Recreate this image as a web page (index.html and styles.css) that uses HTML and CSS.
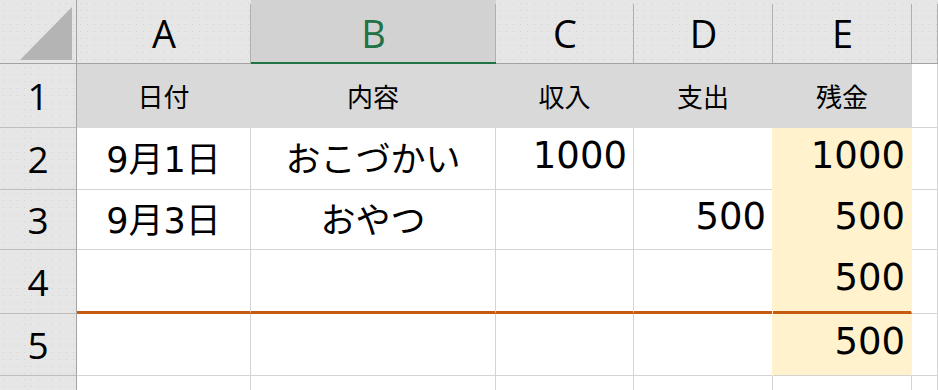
FILE: index.html
```html
<!DOCTYPE html>
<html lang="ja">
<head>
  <meta charset="UTF-8" />
  <meta name="viewport" content="width=device-width, initial-scale=1.0"/>
  <title>おこづかい帳</title>
  <link rel="stylesheet" href="styles.css">
</head>
<body>

  <div class="sheet">
    <!-- cabeçalho das colunas -->
    <div class="corner">
      <svg width="53" height="54" viewBox="0 0 53 54"><polygon points="0,53 52,53 52,0" fill="#b4b4b4"/></svg>
    </div>
    <div class="col-head">A</div>
    <div class="col-head ativo">B</div>
    <div class="col-head">C</div>
    <div class="col-head">D</div>
    <div class="col-head">E</div>
    <div class="col-head"></div>

    <!-- linha 1: títulos -->
    <div class="row-head">1</div>
    <div class="cell titulo">日付</div>
    <div class="cell titulo">内容</div>
    <div class="cell titulo">収入</div>
    <div class="cell titulo">支出</div>
    <div class="cell titulo">残金</div>
    <div class="cell"></div>

    <div class="row-head">2</div>
    <div class="cell">9月1日</div>
    <div class="cell">おこづかい</div>
    <div class="cell num">1000</div>
    <div class="cell num"></div>
    <div class="cell num saldo">1000</div>
    <div class="cell"></div>

    <div class="row-head">3</div>
    <div class="cell">9月3日</div>
    <div class="cell">おやつ</div>
    <div class="cell num"></div>
    <div class="cell num">500</div>
    <div class="cell num saldo">500</div>
    <div class="cell"></div>

    <div class="row-head">4</div>
    <div class="cell total"></div>
    <div class="cell total"></div>
    <div class="cell num total"></div>
    <div class="cell num total"></div>
    <div class="cell num saldo total">500</div>
    <div class="cell"></div>

    <div class="row-head">5</div>
    <div class="cell"></div>
    <div class="cell"></div>
    <div class="cell num"></div>
    <div class="cell num"></div>
    <div class="cell num saldo ultimo">500</div>
    <div class="cell"></div>

    <div class="row-head">6</div>
    <div class="cell"></div>
    <div class="cell"></div>
    <div class="cell"></div>
    <div class="cell"></div>
    <div class="cell"></div>
    <div class="cell"></div>
  </div>

</body>
</html>
```

FILE: styles.css
```css
:root {
  --cabecalho: #e6e6e6;
  --linha-cabecalho: #a3a3a3;
  --grade: #d4d4d4;
  --titulo: #d9d9d9;
  --amarelo: #fff2cc;
  --verde: #217346;
  --laranja: #c55a11;
}

* {
  margin: 0;
  padding: 0;
  box-sizing: border-box;
}

body {
  background-color: #ffffff;
  color: #000;
  overflow: hidden;
}

.sheet {
  display: grid;
  grid-template-columns: 77px 174px 245px 138px 139px 139px 1fr;
  grid-template-rows: 64px 64px 62px 60px 64px 62px 62px;
  width: 938px;
  height: 390px;
}

/* fundo pontilhado dos cabeçalhos */
.corner,
.col-head,
.row-head {
  background-color: var(--cabecalho);
  background-image: radial-gradient(circle, #d2d2d2 0.7px, transparent 1px);
  background-size: 7px 7px;
}

.corner {
  display: flex;
  justify-content: flex-end;
  align-items: flex-end;
  padding: 0 3px 2px 0;
  border-right: 1px solid var(--linha-cabecalho);
  border-bottom: 1px solid var(--linha-cabecalho);
}

.col-head {
  display: flex;
  justify-content: center;
  align-items: center;
  padding-top: 2px;
  font-family: "Open Sans", sans-serif;
  font-size: 38px;
  border-bottom: 1px solid var(--linha-cabecalho);
  position: relative;
}

/* divisória vertical começa um pouco abaixo do topo */
.col-head::after {
  content: "";
  position: absolute;
  top: 4px;
  right: 0;
  bottom: 0;
  width: 1px;
  background-color: #b0b0b0;
}

.col-head.ativo {
  background-color: #d2d2d2;
  color: var(--verde);
  border-bottom: 2px solid var(--verde);
  padding-top: 3px;
}

.row-head {
  display: flex;
  justify-content: center;
  align-items: center;
  font-family: "Open Sans", sans-serif;
  font-size: 37px;
  border-right: 1px solid var(--linha-cabecalho);
  border-bottom: 1px solid #bdbdbd;
}

.cell {
  display: flex;
  justify-content: center;
  align-items: center;
  padding-bottom: 5px;
  font-family: "DejaVu Sans", "Noto Sans CJK JP", sans-serif;
  font-size: 35px;
  border-right: 1px solid var(--grade);
  border-bottom: 1px solid var(--grade);
  white-space: nowrap;
}

.cell.num {
  justify-content: flex-end;
  padding-right: 6px;
  padding-bottom: 7px;
  font-size: 37px;
}

.cell.titulo {
  background-color: var(--titulo);
  border-color: var(--titulo);
  padding-bottom: 0;
  font-family: "Noto Sans CJK JP", sans-serif;
  font-size: 26px;
}

.cell.saldo {
  background-color: var(--amarelo);
  border-color: var(--amarelo);
  box-shadow: -1px 0 0 var(--amarelo);
}

.cell.saldo.ultimo {
  border-bottom-color: var(--grade);
}

.cell.total {
  border-bottom: 3px solid var(--laranja);
}
```
